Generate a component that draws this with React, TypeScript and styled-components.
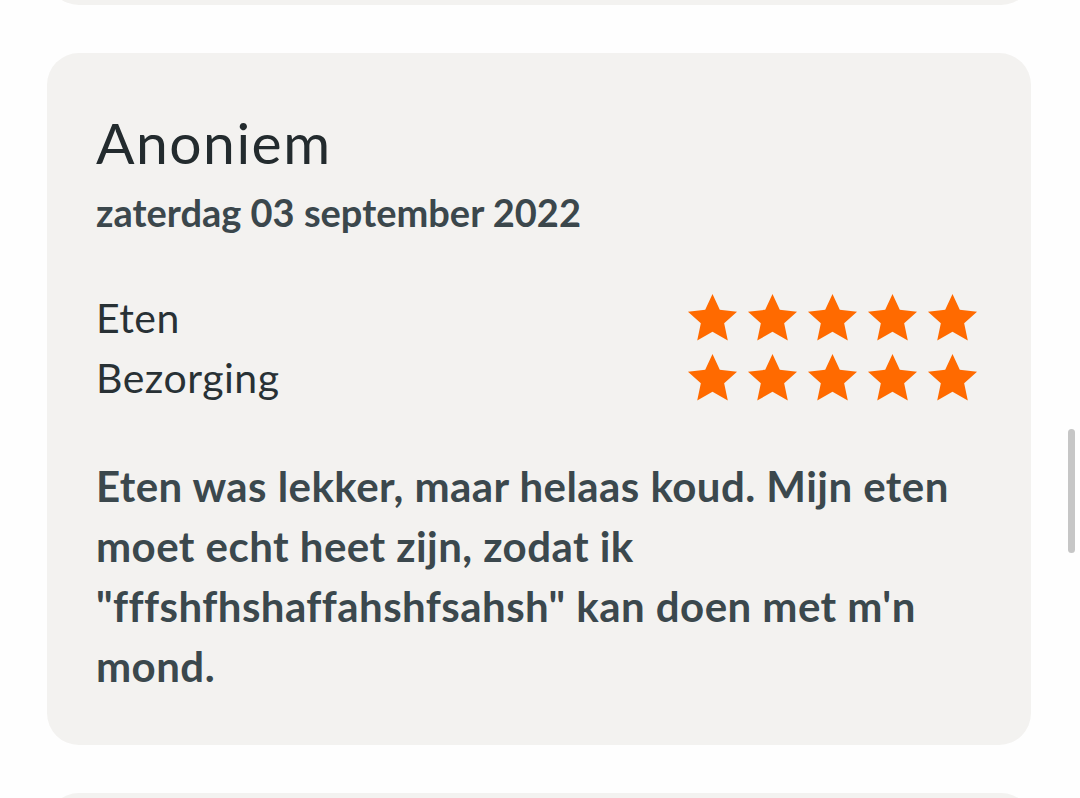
import React from "react";
import styled, {createGlobalStyle} from "styled-components";

const Global = createGlobalStyle`
  body{
    margin: 0;
    background: #fefefe;
    font-family: Lato, "Open Sans", sans-serif;
  }
`

const Page = styled.div`
  position: relative;
  height: 798px;
  overflow: hidden;
  display: flex;
  flex-direction: column;
  gap: 48px;
`

const Clip = styled.div<{$edge: "top" | "bottom"}>`
  height: 5px;
  overflow: hidden;
  display: flex;
  flex-direction: column;
  justify-content: ${p => p.$edge === "bottom" ? "flex-end" : "flex-start"};
  flex-shrink: 0;
  padding: 0 47px 0 47px;
`

const Card = styled.div`
  background: #f3f2f0;
  border-radius: 32px;
  flex-shrink: 0;
`

const Ghost = styled(Card)`
  height: 200px;
`

const Review = styled(Card)`
  margin: 0 49px 0 47px;
  padding: 53px 53px 49px 49px;
  color: #2b3539;
`

const Name = styled.h2`
  margin: 0;
  font-size: 57px;
  font-weight: 400;
  line-height: 72px;
  letter-spacing: 1.5px;
  color: #232b2e;
`

const Date = styled.div`
  font-size: 38px;
  font-weight: 700;
  line-height: 44px;
  color: #3b474c;
  margin-top: 12px;
`

const Ratings = styled.div`
  margin-top: 59px;
  display: flex;
  flex-direction: column;
  gap: 10px;
`

const Row = styled.div`
  display: flex;
  align-items: center;
  justify-content: space-between;
  height: 50px;
  label{
    font-size: 41px;
    line-height: 50px;
    letter-spacing: 0.5px;
    color: #283135;
  }
`

const Stars = styled.div`
  display: flex;
  gap: 9px;
  svg{
    width: 51px;
    height: 51px;
    display: block;
  }
`

const Body = styled.p`
  margin: 53px 0 0 0;
  font-size: 42px;
  font-weight: 700;
  line-height: 60px;
  letter-spacing: 0.45px;
  color: #3b484d;
`

const Scroll = styled.div`
  position: absolute;
  right: 5px;
  top: 429px;
  width: 7px;
  height: 124px;
  border-radius: 4px;
  background: #c6c6c6;
`

function Star(){
  return <svg viewBox="1.5 1.2 21 21">
    <path fill="#ff6a00" d="M12 1.6l3 6.5 7.1.8-5.3 4.8 1.5 7.1L12 17.2l-6.3 3.6 1.5-7.1-5.3-4.8 7.1-.8z"/>
  </svg>
}

const rows = ["Eten", "Bezorging"]

export default function App(){
  return <>
    <Global/>
    <Page>
      <Clip $edge="bottom"><Ghost/></Clip>
      <Review>
        <Name>Anoniem</Name>
        <Date>zaterdag 03 september 2022</Date>
        <Ratings>
          {rows.map(r => <Row key={r}>
            <label>{r}</label>
            <Stars>{[0,1,2,3,4].map(i => <Star key={i}/>)}</Stars>
          </Row>)}
        </Ratings>
        <Body>
          Eten was lekker, maar helaas koud. Mijn eten moet echt heet zijn, zodat ik "fffshfhshaffahshfsahsh" kan doen met m'n mond.
        </Body>
      </Review>
      <Clip $edge="top"><Ghost/></Clip>
      <Scroll/>
    </Page>
  </>
}
